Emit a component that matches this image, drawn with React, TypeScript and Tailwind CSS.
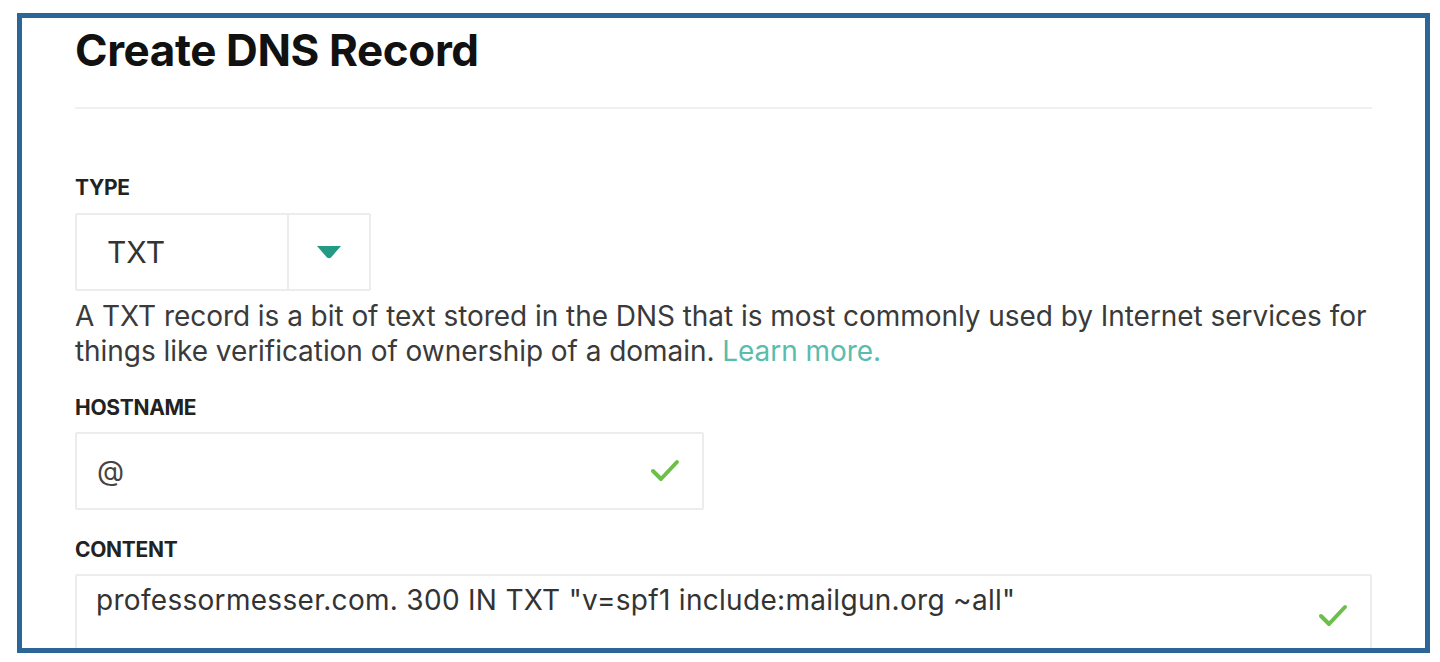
export default function App() {
  return (
    <div className="h-[662px] w-[1440px] overflow-hidden bg-white pl-[17px] pt-[13px] font-['Inter',sans-serif]">
      <div className="h-[640px] w-[1413px] overflow-hidden border-[5px] border-[#2c6698] pl-[53px] pr-[53px]">
        <h1 className="pt-[8px] text-[44px] font-bold leading-[48px] tracking-[-0.4px] text-[#111]">
          Create DNS Record
        </h1>
        <div className="mt-[33px] h-[2px] w-full bg-[#f0f0f0]" />

        <div className="mt-[68px] text-[21px] font-bold leading-[22px] tracking-[-0.3px] text-[#222]">TYPE</div>
        <div className="mt-[14px] flex h-[78px] w-[296px] rounded-[2px] border-2 border-[#ececec]">
          <div className="flex flex-1 items-center pl-[30px] text-[30px] text-[#333]">TXT</div>
          <div className="flex w-[82px] items-center justify-center border-l-2 border-[#ececec]">
            <svg width="26" height="14" viewBox="0 0 26 14">
              <path d="M1 1 H25 L15 12.5 Q13 14 11 12.5 Z" fill="#239a83" />
            </svg>
          </div>
        </div>

        <p className="mt-[8px] text-[28px] leading-[35px] tracking-[-0.05px] text-[#3a3a3a]">
          A TXT record is a bit of text stored in the DNS that is most commonly used by Internet services for things
          like verification of ownership of a domain. <span className="text-[#5bbcad]">Learn more.</span>
        </p>

        <div className="mt-[28px] text-[21px] font-bold leading-[22px] tracking-[-0.3px] text-[#222]">HOSTNAME</div>
        <div className="mt-[13px] flex h-[78px] w-[629px] items-center justify-between rounded-[2px] border-2 border-[#ececec] pl-[20px] pr-[22px]">
          <span className="text-[28px] text-[#444]">@</span>
          <svg width="30" height="24" viewBox="0 0 30 24">
            <path d="M3 12 L11 20 L27 3" fill="none" stroke="#6cbf4a" strokeWidth="4" strokeLinecap="round" strokeLinejoin="round" />
          </svg>
        </div>

        <div className="mt-[29px] text-[21px] font-bold leading-[22px] tracking-[-0.3px] text-[#222]">CONTENT</div>
        <div className="mt-[13px] flex h-[100px] w-full justify-between rounded-[2px] border-2 border-[#ececec] pl-[19px] pr-[22px] pt-[6px]">
          <span className="text-[28px] leading-[36px] tracking-[0.3px] text-[#333]">
            professormesser.com. 300 IN TXT "v=spf1 include:mailgun.org ~all"
          </span>
          <svg className="mt-[22px]" width="30" height="24" viewBox="0 0 30 24">
            <path d="M3 12 L11 20 L27 3" fill="none" stroke="#6cbf4a" strokeWidth="4" strokeLinecap="round" strokeLinejoin="round" />
          </svg>
        </div>
      </div>
    </div>
  );
}
